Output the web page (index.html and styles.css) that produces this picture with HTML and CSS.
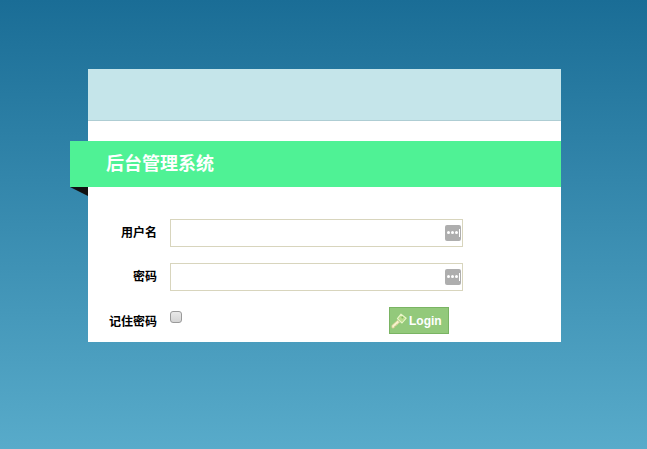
FILE: index.html
```html
<!DOCTYPE html>
<html lang="zh">
<head>
<meta charset="utf-8">
<title>后台管理系统</title>
<link rel="stylesheet" href="styles.css">
</head>
<body>
<main class="card">
  <div class="card-top"></div>
  <h1 class="ribbon">后台管理系统</h1>
  <form class="form">
    <div class="row">
      <label class="label">用户名</label>
      <div class="field"><span class="dots"><i></i><i></i><i></i><b></b></span></div>
    </div>
    <div class="row">
      <label class="label">密码</label>
      <div class="field"><span class="dots"><i></i><i></i><i></i><b></b></span></div>
    </div>
    <div class="row row-last">
      <label class="label label-last">记住密码</label>
      <span class="check"></span>
      <button class="login" type="button">
        <svg class="key" width="16" height="16" viewBox="0 0 16 16">
          <path d="M0.8 12.6 L6.6 7.2 L8.8 9.4 L7.4 10 L7 11.2 L5.6 11.4 L5.2 12.8 L3.8 13 L3 15 L1 15 Z" fill="#f7f3cf" stroke="#d8c98c" stroke-width="0.7"/>
          <path d="M6.4 5.6 L10 1.2 L15.2 5.2 L11 10 Z" fill="#b9dd8a" stroke="#e9f5c8" stroke-width="1.1" stroke-linejoin="round"/>
          <circle cx="11.4" cy="4.6" r="1" fill="#7fb45f"/>
        </svg>
        <span>Login</span>
      </button>
    </div>
  </form>
</main>
</body>
</html>
```
FILE: styles.css
```css
html, body {
  margin: 0;
  height: 449px;
  overflow: hidden;
}
body {
  background: linear-gradient(to bottom, #1a6d96 0%, #58abca 100%);
  font-family: "Liberation Sans", "Noto Sans CJK SC", sans-serif;
  padding: 69px 86px 0 88px;
  box-sizing: border-box;
}
.card {
  background: #fff;
  height: 273px;
}
.card-top {
  height: 52px;
  background: #c5e5ea;
  border-bottom: 1px solid #aecdd3;
  box-sizing: border-box;
}
.ribbon {
  position: relative;
  margin: 20px 0 0 -18px;
  height: 46px;
  padding-left: 36px;
  background: #4ff295;
  color: #fff;
  font-size: 18px;
  font-weight: 700;
  line-height: 46px;
}
.ribbon::after {
  content: "";
  position: absolute;
  left: 0;
  top: 100%;
  width: 18px;
  height: 9px;
  background: #111;
  clip-path: polygon(0 0, 100% 0, 100% 100%);
}
.form {
  padding-top: 32px;
  display: flex;
  flex-direction: column;
  gap: 16px;
}
.row {
  display: flex;
  align-items: center;
  height: 28px;
}
.label {
  width: 69px;
  margin-right: 13px;
  padding-bottom: 4px;
  text-align: right;
  font-size: 12px;
  font-weight: 700;
  color: #000;
}
.field {
  width: 293px;
  height: 28px;
  box-sizing: border-box;
  border: 1px solid #d8d5bd;
  background: #fff;
  display: flex;
  align-items: center;
  justify-content: flex-end;
  padding-right: 1px;
}
.dots {
  width: 16px;
  height: 16px;
  margin-bottom: 1px;
  background: #aeaeae;
  border-radius: 2px;
  display: flex;
  align-items: center;
  justify-content: center;
  gap: 1px;
}
.dots i {
  width: 3px;
  height: 3px;
  border-radius: 50%;
  background: #fff;
}
.dots b {
  width: 1px;
  height: 8px;
  background: #fff;
}
.row-last {
  align-items: flex-start;
}
.label-last {
  padding-top: 5px;
  padding-bottom: 0;
}
.check {
  width: 12px;
  height: 12px;
  margin-top: 4px;
  box-sizing: border-box;
  border: 1px solid #9a9a9a;
  border-radius: 3px;
  background: linear-gradient(#e9e9e9, #d4d4d4);
}
.login {
  margin: 0 0 0 207px;
  width: 60px;
  height: 27px;
  box-sizing: border-box;
  border: 1px solid #7ab463;
  background: #93c97b;
  color: #fff;
  font-family: "Liberation Sans", sans-serif;
  font-size: 12px;
  font-weight: 700;
  padding: 0 0 0 1px;
  display: flex;
  align-items: center;
  justify-content: flex-start;
  gap: 2px;
}
.key {
  flex: none;
}
```
